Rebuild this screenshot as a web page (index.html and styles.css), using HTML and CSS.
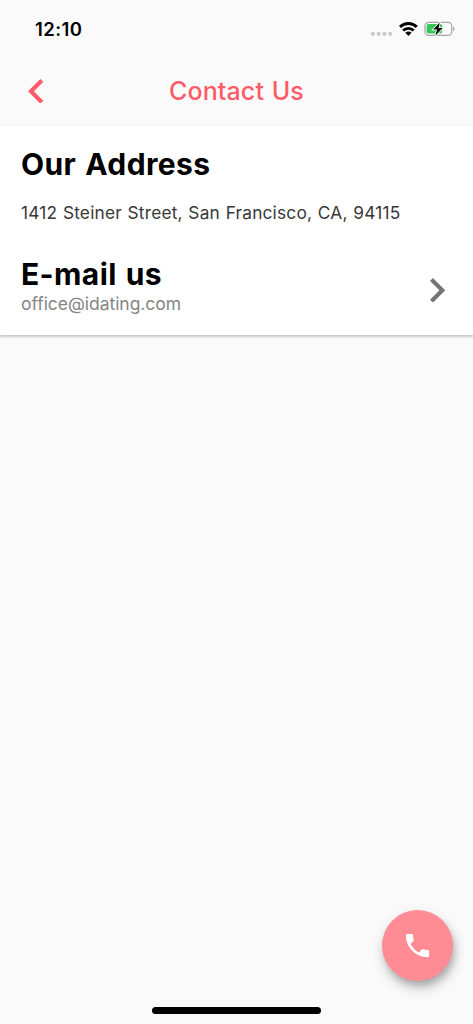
FILE: index.html
```html
<!DOCTYPE html>
<html lang="en">
<head>
<meta charset="utf-8">
<title>Contact Us</title>
<link rel="stylesheet" href="styles.css">
</head>
<body>
<div class="screen">
  <div class="status-bar">
    <span class="time">12:10</span>
    <svg class="status-icons" width="88" height="20" viewBox="0 0 88 20">
      <g fill="#cbcbcd">
        <circle cx="3.8" cy="13.8" r="2.1"/><circle cx="9.7" cy="13.8" r="2.1"/><circle cx="15.4" cy="13.8" r="2.1"/><circle cx="21.3" cy="13.8" r="2.1"/>
      </g>
      <g fill="none" stroke="#000" stroke-width="2.9">
        <path d="M31 6.9a12 12 0 0 1 16.8 0"/>
        <path d="M34.1 10.5a7.6 7.6 0 0 1 10.6 0"/>
      </g>
      <path d="M36.3 12.8a4.4 4.4 0 0 1 6.2 0l-3.1 3.1z"/>
      <rect x="55.9" y="2.3" width="26.9" height="13.1" rx="3.8" fill="none" stroke="#a5a5a7" stroke-width="1.2"/>
      <path d="M84.1 6.5a2.7 2.7 0 0 1 0 4.8z" fill="#a5a5a7"/>
      <rect x="57.6" y="4.1" width="15.6" height="9.5" rx="2.1" fill="#34c759"/>
      <path d="M70.8 2.5L64.2 9.6h3.9l-1.8 6.1 7.4-7.6h-4.1z" stroke="#fafafa" stroke-width="1.8" paint-order="stroke"/>
    </svg>
  </div>
  <header class="app-bar">
    <svg class="chevron back" viewBox="8 6 7.41 12"><path d="M15.41 7.41L14 6l-6 6 6 6 1.41-1.41L10.83 12z"/></svg>
    <h1 class="title">Contact Us</h1>
  </header>
  <main class="card">
    <section class="address">
      <h2 class="heading">Our Address</h2>
      <p class="street">1412 Steiner Street, San Francisco, CA, 94115</p>
    </section>
    <section class="email-row">
      <div>
        <h2 class="heading">E-mail us</h2>
        <p class="email">office@idating.com</p>
      </div>
      <svg class="chevron forward" viewBox="8.59 6 7.41 12"><path d="M10 6L8.59 7.41 13.17 12l-4.58 4.59L10 18l6-6z"/></svg>
    </section>
  </main>
  <footer class="bottom">
    <button class="call" aria-label="Call">
      <svg width="31" height="31" viewBox="0 0 24 24"><path fill="#fff" d="M6.62 10.79c1.44 2.83 3.76 5.14 6.59 6.59l2.2-2.2c.27-.27.67-.36 1.02-.24 1.12.37 2.33.57 3.57.57.55 0 1 .45 1 1V20c0 .55-.45 1-1 1-9.39 0-17-7.61-17-17 0-.55.45-1 1-1h3.5c.55 0 1 .45 1 1 0 1.25.2 2.45.57 3.57.11.35.03.74-.25 1.02l-2.2 2.2z"/></svg>
    </button>
    <div class="home-indicator"></div>
  </footer>
</div>
</body>
</html>
```
FILE: styles.css
```css
* { box-sizing: border-box; }
body { margin: 0; background: #fafafa; font-family: Inter, "Liberation Sans", sans-serif; }
h1, h2, p { margin: 0; white-space: nowrap; }
.screen { display: flex; flex-direction: column; width: 473px; height: 1024px; background: #fafafa; overflow: hidden; }
.status-bar { display: flex; justify-content: space-between; align-items: flex-start; height: 55px; padding: 20px 16px 0 35px; }
.time { font-size: 18.5px; line-height: 19px; font-weight: 600; letter-spacing: 0.4px; }
.status-icons { display: block; }
.app-bar { display: grid; grid-template-columns: 43.5px 1fr 43.5px; align-items: center; height: 71px; padding-top: 2px; border-bottom: 1px solid #f5f5f5; }
.title { grid-column: 2; font-size: 25px; line-height: 30px; font-weight: 500; color: #ff5a68; text-align: center; letter-spacing: 0.1px; word-spacing: 1px; }
.chevron { width: 15.3px; height: 24.7px; flex: none; }
.back { fill: #ff5a68; justify-self: end; }
.card { height: 209px; padding: 20px 28px 0 21px; background: #fff; box-shadow: 0 2px 2px rgba(0,0,0,.2); }
.heading { font-size: 30px; line-height: 36px; font-weight: 700; letter-spacing: 0.4px; word-spacing: 1.5px; color: #000; }
.street { margin-top: 20px; font-size: 17.3px; line-height: 22px; color: #383838; letter-spacing: 0.2px; word-spacing: 0.6px; }
.email-row { display: flex; justify-content: space-between; align-items: center; margin-top: 32px; }
.email { padding-top: 1px; font-size: 17.5px; line-height: 22px; color: #858585; letter-spacing: -0.04px; }
.forward { fill: #757575; margin-top: 9px; }
.bottom { display: flex; flex-direction: column; margin-top: auto; align-items: center; padding-bottom: 10px; }
.call { display: grid; place-items: center; align-self: flex-end; width: 71px; height: 71px; margin: 0 20px 26px 0; padding: 0; border: 0; border-radius: 50%; background: #ff8c95; box-shadow: 2px 5px 7px -1px rgba(0,0,0,.2), 2px 8px 13px rgba(0,0,0,.17), 0 1px 20px rgba(0,0,0,.04); }
.home-indicator { width: 169px; height: 7px; border-radius: 4px; background: #000; }
```
